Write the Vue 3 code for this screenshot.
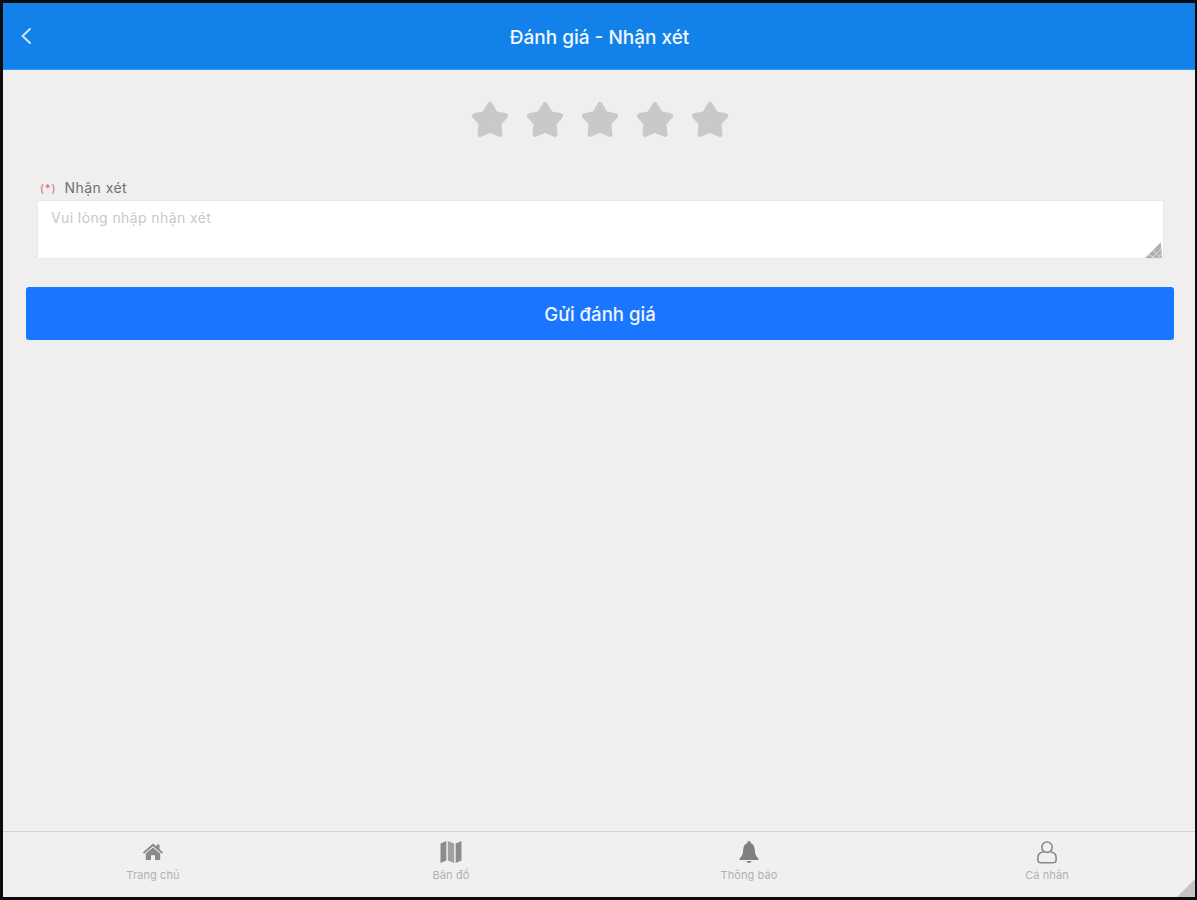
<script setup>
const stars = [1, 2, 3, 4, 5]
const tabs = [
  { label: 'Trang chủ', icon: 'home' },
  { label: 'Bản đồ', icon: 'map' },
  { label: 'Thông báo', icon: 'bell' },
  { label: 'Cá nhân', icon: 'user' }
]
</script>

<template>
  <div class="frame">
    <header class="topbar">
      <button class="back" aria-label="Quay lại">
        <svg width="14" height="22" viewBox="0 0 14 22" fill="none">
          <path d="M11 4 L3.5 11 L11 18" stroke="#cfe4fb" stroke-width="2" stroke-linecap="round" stroke-linejoin="round" />
        </svg>
      </button>
      <h1 class="title">Đánh giá - Nhận xét</h1>
    </header>

    <main class="content">
      <div class="stars">
        <svg v-for="s in stars" :key="s" class="star" width="40" height="40" viewBox="0 0 40 40">
          <path d="M20 4.5 L25.4 13.6 L35.6 15.8 L28.8 23.6 L30 34.4 L20 30.2 L10 34.4 L11.2 23.6 L4.4 15.8 L14.6 13.6 Z" fill="#c9c9c9" stroke="#c9c9c9" stroke-width="5" stroke-linejoin="round" />
        </svg>
      </div>

      <div class="field">
        <label class="label"><span class="req">(*)</span><span>Nhận xét</span></label>
        <div class="box">
          <textarea class="input" placeholder="Vui lòng nhập nhận xét"></textarea>
          <svg class="grip" width="18" height="18" viewBox="0 0 16 16">
            <path d="M1 16 L15 2 L16 16 Z" fill="#b0b0b0" />
            <path d="M7 16 L16 7 M12 16 L16 12 M4 13 L10 16 M8 9 L15 16" stroke="#fff" stroke-width="0.8" opacity="0.6" />
          </svg>
        </div>
      </div>

      <button class="submit">Gửi đánh giá</button>
    </main>

    <nav class="tabbar">
      <div v-for="t in tabs" :key="t.label" class="tab">
        <svg class="tab-icon" width="24" height="24" viewBox="0 0 24 24">
          <template v-if="t.icon === 'home'">
            <path d="M12 3.5 L1.8 12.5 L3 13.8 L12 6.3 L21 13.8 L22.2 12.5 L18.5 9.2 V4.5 H15.6 V6.6 Z" fill="#8a8a8a" />
            <path d="M12 7.6 L4.8 13.6 V20 H10 V15.2 H14 V20 H19.2 V13.6 Z" fill="#8a8a8a" />
          </template>
          <template v-else-if="t.icon === 'map'">
            <path d="M1.5 3.5 L7.3 1 V20.5 L1.5 23 Z" fill="#8c8c8c" />
            <path d="M8.8 1 L15.2 3.5 V23 L8.8 20.5 Z" fill="#a2a2a2" />
            <path d="M16.7 3.5 L22.5 1 V20.5 L16.7 23 Z" fill="#8c8c8c" />
          </template>
          <template v-else-if="t.icon === 'bell'">
            <circle cx="12" cy="2.6" r="1.7" fill="#808080" />
            <path d="M12 3 C7.8 3 6.4 6.3 6.2 10 C6 14 5 16.2 2.6 18.6 V20 H21.4 V18.6 C19 16.2 18 14 17.8 10 C17.6 6.3 16.2 3 12 3 Z" fill="#808080" />
            <path d="M9.4 21 a2.7 2.7 0 0 0 5.2 0 Z" fill="#808080" />
          </template>
          <template v-else>
            <circle cx="12" cy="7.2" r="5.2" fill="none" stroke="#8a8a8a" stroke-width="1.6" />
            <path d="M8 12 C4.5 12.5 2.9 14.5 2.9 17.5 V20 Q2.9 22.8 5.8 22.8 H18.2 Q21.1 22.8 21.1 20 V17.5 C21.1 14.5 19.5 12.5 16 12" fill="none" stroke="#8a8a8a" stroke-width="1.6" stroke-linecap="round" />
          </template>
        </svg>
        <span class="tab-label">{{ t.label }}</span>
      </div>
    </nav>

    <svg class="corner" width="18" height="18" viewBox="0 0 18 18">
      <path d="M0 18 L18 0 V18 Z" fill="#c4c4c4" />
    </svg>
  </div>
</template>

<style>
html, body { margin: 0; background: #0c0c10; }
</style>

<style scoped>
.frame {
  position: relative;
  box-sizing: border-box;
  width: 1197px;
  height: 900px;
  display: flex;
  flex-direction: column;
  padding: 3px 2px 3px 3px;
  background: #0c0c10;
  font-family: Inter, "Noto Sans", sans-serif;
  overflow: hidden;
}
.topbar {
  position: relative;
  height: 67px;
  flex: none;
  display: flex;
  align-items: center;
  justify-content: center;
  background: #1282ea;
  box-shadow: inset 0 -1px 0 #3a97ee;
}
.back {
  position: absolute;
  left: 16px;
  top: 22px;
  padding: 0;
  border: 0;
  background: none;
  line-height: 0;
}
.title {
  margin: 2px 0 0 1px;
  font-size: 19px;
  font-weight: 500;
  color: #f2f8fe;
}
.content {
  flex: 1;
  min-height: 0;
  background: #efefef;
  padding: 0 21px 0 23px;
  display: flex;
  flex-direction: column;
}
.stars {
  display: flex;
  justify-content: center;
  gap: 15px;
  padding-top: 30px;
  margin-left: -1px;
}
.star { display: block; }
.field {
  margin: 39px 10px 0 11px;
}
.label {
  display: flex;
  align-items: center;
  gap: 8px;
  height: 17px;
  padding-left: 3px;
  font-size: 14px;
  letter-spacing: 0.45px;
  color: #707070;
}
.req { color: #e2666a; font-size: 11px; letter-spacing: 1px; }
.box {
  position: relative;
  height: 59px;
  margin-top: 4px;
}
.input {
  box-sizing: border-box;
  display: block;
  width: 100%;
  height: 100%;
  padding: 8px 13px;
  border: 1px solid #e8e8e8;
  border-radius: 2px;
  background: #fff;
  resize: none;
  outline: none;
  font-family: inherit;
  font-size: 14px;
  letter-spacing: 0.4px;
}
.input::placeholder { color: #c8c8c8; opacity: 1; }
.grip {
  position: absolute;
  right: 2px;
  bottom: 1px;
}
.submit {
  margin-top: 28px;
  height: 53px;
  flex: none;
  border: 0;
  border-radius: 3px;
  background: #1a75ff;
  color: #eef5ff;
  font-family: inherit;
  font-size: 18.6px;
  font-weight: 500;
}
.tabbar {
  height: 66px;
  flex: none;
  display: grid;
  grid-template-columns: repeat(4, 298px);
  padding-left: 1px;
  background: #f0f0f0;
  border-top: 1px solid #d2d2d2;
  box-sizing: border-box;
}
.tab {
  display: flex;
  flex-direction: column;
  align-items: center;
  padding-top: 8px;
}
.tab-icon { display: block; }
.tab-label {
  margin-top: 4px;
  font-size: 11px;
  letter-spacing: 0.1px;
  line-height: 14px;
  color: #b0b0b0;
}
.corner {
  position: absolute;
  right: 2px;
  bottom: 3px;
}
</style>
